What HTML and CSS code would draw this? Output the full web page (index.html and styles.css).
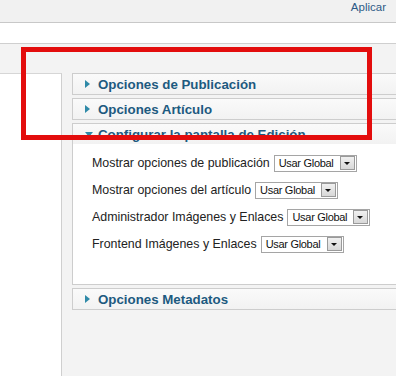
FILE: index.html
```html
<!DOCTYPE html>
<html lang="es">
<head>
<meta charset="utf-8">
<link rel="stylesheet" href="styles.css">
</head>
<body>
<div class="toolbar"><a class="apply">Aplicar</a></div>
<div class="subbar"></div>
<div class="main">
  <div class="sidebar"></div>
  <div class="panels">
    <div class="panel"><div class="ph"><span class="arrow right"></span>Opciones de Publicación</div></div>
    <div class="panel"><div class="ph"><span class="arrow right"></span>Opciones Artículo</div></div>
    <div class="panel">
      <div class="ph"><span class="arrow down"></span>Configurar la pantalla de Edición</div>
      <div class="pbody">
        <div class="row"><span class="lbl">Mostrar opciones de publicación</span><span class="sel"><span class="val">Usar Global</span><span class="btn"></span></span></div>
        <div class="row"><span class="lbl">Mostrar opciones del artículo</span><span class="sel"><span class="val">Usar Global</span><span class="btn"></span></span></div>
        <div class="row"><span class="lbl">Administrador Imágenes y Enlaces</span><span class="sel"><span class="val">Usar Global</span><span class="btn"></span></span></div>
        <div class="row"><span class="lbl">Frontend Imágenes y Enlaces</span><span class="sel"><span class="val">Usar Global</span><span class="btn"></span></span></div>
      </div>
    </div>
    <div class="panel"><div class="ph"><span class="arrow right"></span>Opciones Metadatos</div></div>
  </div>
</div>
<div class="highlight"></div>
</body>
</html>
```
FILE: styles.css
```css
html, body { margin: 0; padding: 0; }
body {
  width: 396px; height: 376px; overflow: hidden; position: relative;
  font-family: "Liberation Sans", Arial, sans-serif;
  background: #f3f3f3;
}
.toolbar {
  height: 23px; box-sizing: border-box; background: #f1f1f1; border-bottom: 1px solid #c8c8c8;
  display: flex; justify-content: flex-end; align-items: flex-start;
  padding: 1px 10px 0 0;
}
.apply { font-size: 11.5px; color: #2d5a86; }
.subbar { height: 20px; background: #fff; border-bottom: 1px solid #cfcfcf; }
.main {
  display: flex; padding-top: 29px; height: 320px; background: #f3f3f3;
}
.sidebar {
  width: 61px; flex: none; background: #fff;
  border-top: 1px solid #d6d6d6; border-right: 1px solid #cfcfcf;
}
.panels {
  margin-left: 10px; width: 360px; flex: none;
  display: flex; flex-direction: column; gap: 3px;
}
.panel { border: 1px solid #cdcdcd; background: #fff; }
.ph {
  height: 20px; display: flex; align-items: center;
  background: linear-gradient(#fafafa, #f2f2f2);
  color: #1d5a80; font-weight: bold; font-size: 13.3px;
  padding-left: 12px;
}
.arrow { width: 0; height: 0; margin-right: 8px; }
.arrow.right {
  border-top: 4px solid transparent; border-bottom: 4px solid transparent;
  border-left: 5px solid #2f8aa8;
}
.arrow.down {
  border-left: 4px solid transparent; border-right: 4px solid transparent;
  border-top: 5px solid #2f8aa8; margin-right: 5px;
}
.pbody {
  height: 140px; box-sizing: border-box;
  padding: 10px 0 0 19px; display: flex; flex-direction: column; gap: 9px;
}
.row { display: flex; align-items: center; height: 18px; font-size: 12.4px; color: #222; }
.lbl { margin-right: 4px; }
.sel {
  display: inline-flex; align-items: center; height: 17px; width: 83px; box-sizing: border-box;
  border: 1px solid #a5a5a5; background: #fff; padding-left: 4px;
  justify-content: space-between;
}
.val { font-size: 11px; color: #111; letter-spacing: -0.3px; }
.btn {
  width: 15px; height: 14px; margin-right: 1px;
  background: linear-gradient(#f0f0f0, #d8d8d8); border: 1px solid #9a9a9a; box-sizing: border-box;
  position: relative;
}
.btn::after {
  content: ""; position: absolute; left: 3px; top: 5px;
  border-left: 3px solid transparent; border-right: 3px solid transparent; border-top: 3px solid #111;
}
.highlight {
  position: absolute; left: 21px; top: 47px; width: 341px; height: 83px;
  border: 5px solid #e30d0d;
}
```
